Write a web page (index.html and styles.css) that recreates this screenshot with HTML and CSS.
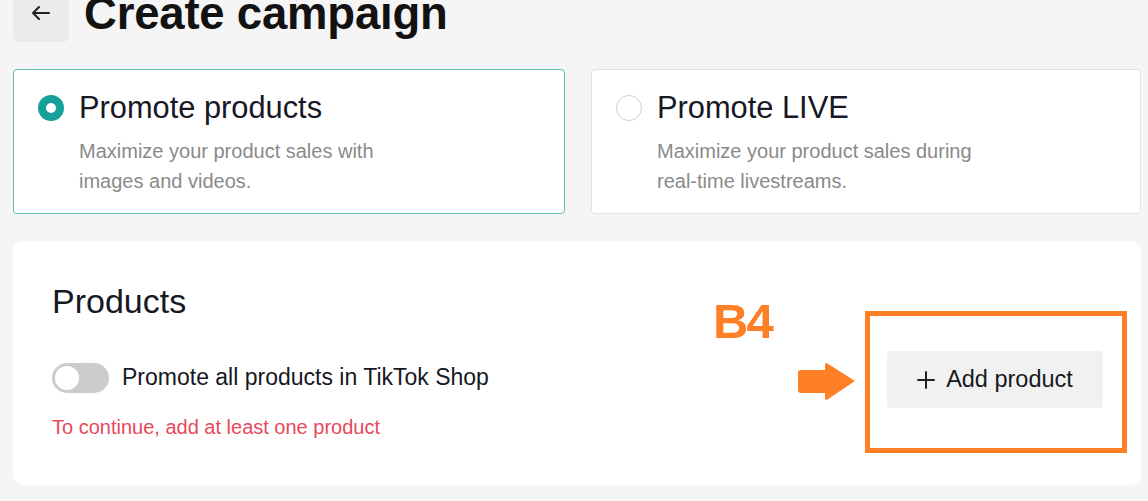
FILE: index.html
```html
<!DOCTYPE html>
<html lang="en">
<head>
<meta charset="utf-8">
<title>Create campaign</title>
<link rel="stylesheet" href="styles.css">
</head>
<body>
<div class="page">
  <header class="header">
    <button class="back" aria-label="Back">
      <svg width="20" height="16" viewBox="0 0 20 16" fill="none" stroke="#222" stroke-width="2" stroke-linecap="round" stroke-linejoin="round"><path d="M18 8H2M8 2L2 8l6 6"/></svg>
    </button>
    <h1 class="title">Create campaign</h1>
  </header>

  <div class="options">
    <div class="option selected">
      <div class="option-head">
        <span class="radio on"></span>
        <span class="option-title">Promote products</span>
      </div>
      <p class="option-desc">Maximize your product sales with<br>images and videos.</p>
    </div>
    <div class="option">
      <div class="option-head">
        <span class="radio"></span>
        <span class="option-title">Promote LIVE</span>
      </div>
      <p class="option-desc">Maximize your product sales during<br>real-time livestreams.</p>
    </div>
  </div>

  <section class="products">
    <h2 class="products-title">Products</h2>
    <div class="products-row">
      <label class="toggle-wrap">
        <span class="toggle"><span class="knob"></span></span>
        <span class="toggle-label">Promote all products in TikTok Shop</span>
      </label>
      <button class="add-btn">
        <svg width="18" height="18" viewBox="0 0 18 18" stroke="#222" stroke-width="2" stroke-linecap="round"><path d="M9 1v16M1 9h16"/></svg>
        <span>Add product</span>
      </button>
    </div>
    <p class="error">To continue, add at least one product</p>

    <span class="note-label">B4</span>
    <svg class="note-arrow" width="58" height="40" viewBox="0 0 58 40"><path d="M3 8h24V2.5a1.5 1.5 0 0 1 2.5-1L57 19l-27.5 18.5a1.5 1.5 0 0 1-2.5-1V31H3a3 3 0 0 1-3-3V11a3 3 0 0 1 3-3z" fill="#ff7f27"/></svg>
    <span class="note-box"></span>
  </section>
</div>
</body>
</html>
```

FILE: styles.css
```css
* { box-sizing: border-box; }
html, body { margin: 0; padding: 0; }
body {
  background: #f5f5f5;
  font-family: "Liberation Sans", Arial, sans-serif;
  color: #161823;
  overflow: hidden;
}
.page {
  padding: 0 7px 0 13px;
}
.header {
  display: flex;
  align-items: center;
  gap: 15px;
  margin-top: -14px;
  height: 56px;
}
.back {
  width: 56px;
  height: 56px;
  border: none;
  border-radius: 6px;
  background: #ebebeb;
  display: flex;
  align-items: center;
  justify-content: center;
  padding: 0;
}
.back svg { margin-top: -2px; }
.title {
  margin: 0;
  font-size: 45.5px;
  line-height: 56px;
  font-weight: 700;
  color: #121212;
  letter-spacing: -0.2px;
}
.options {
  display: grid;
  grid-template-columns: 552px 550px;
  gap: 26px;
  margin-top: 27px;
}
.option {
  background: #fff;
  border: 1px solid #e3e3e3;
  border-radius: 4px;
  height: 145px;
  padding: 20px 24px 17px 24px;
}
.option.selected {
  border-color: #5fbdb8;
}
.option-head {
  display: flex;
  align-items: center;
  gap: 15px;
  height: 36px;
}
.radio {
  width: 26px;
  height: 26px;
  border-radius: 50%;
  border: 1.5px solid #cfcfcf;
  background: #fff;
  flex: none;
}
.radio.on {
  border: 8px solid #16a09a;
  background: #fff;
}
.option-title {
  font-size: 30.8px;
  line-height: 36px;
  color: #161823;
}
.option-desc {
  margin: 10px 0 0 41px;
  font-size: 20px;
  line-height: 30px;
  color: #8a8a8a;
}
.products {
  position: relative;
  margin-top: 27px;
  background: #fff;
  border-radius: 10px;
  height: 244px;
  padding: 40px 38px 0 39px;
}
.products-title {
  margin: 0;
  font-size: 34px;
  line-height: 40px;
  font-weight: 400;
  color: #161823;
}
.products-row {
  display: flex;
  align-items: center;
  justify-content: space-between;
  margin-top: 30px;
  height: 57px;
}
.toggle-wrap {
  display: flex;
  align-items: center;
  gap: 13px;
  margin-top: -4px;
}
.toggle {
  width: 57px;
  height: 30px;
  border-radius: 15px;
  background: #cccccc;
  padding: 3px;
  display: flex;
}
.knob {
  width: 24px;
  height: 24px;
  border-radius: 50%;
  background: #fff;
}
.toggle-label {
  font-size: 23px;
  color: #161823;
}
.add-btn {
  width: 216px;
  height: 57px;
  border: none;
  border-radius: 4px;
  background: #f1f1f1;
  display: flex;
  align-items: center;
  justify-content: center;
  gap: 11px;
  font-family: inherit;
  font-size: 23.5px;
  color: #161823;
  padding: 0;
}
.error {
  margin: 7px 0 0;
  font-size: 20px;
  line-height: 24px;
  color: #e8485c;
}
.note-label {
  position: absolute;
  left: 700px;
  top: 52px;
  font-size: 49px;
  font-weight: 700;
  line-height: 56px;
  color: #ff7f27;
  letter-spacing: -2px;
}
.note-arrow {
  position: absolute;
  left: 785px;
  top: 121px;
}
.note-box {
  position: absolute;
  left: 852px;
  top: 70px;
  width: 262px;
  height: 142px;
  border: 5px solid #ff7f27;
}
```
